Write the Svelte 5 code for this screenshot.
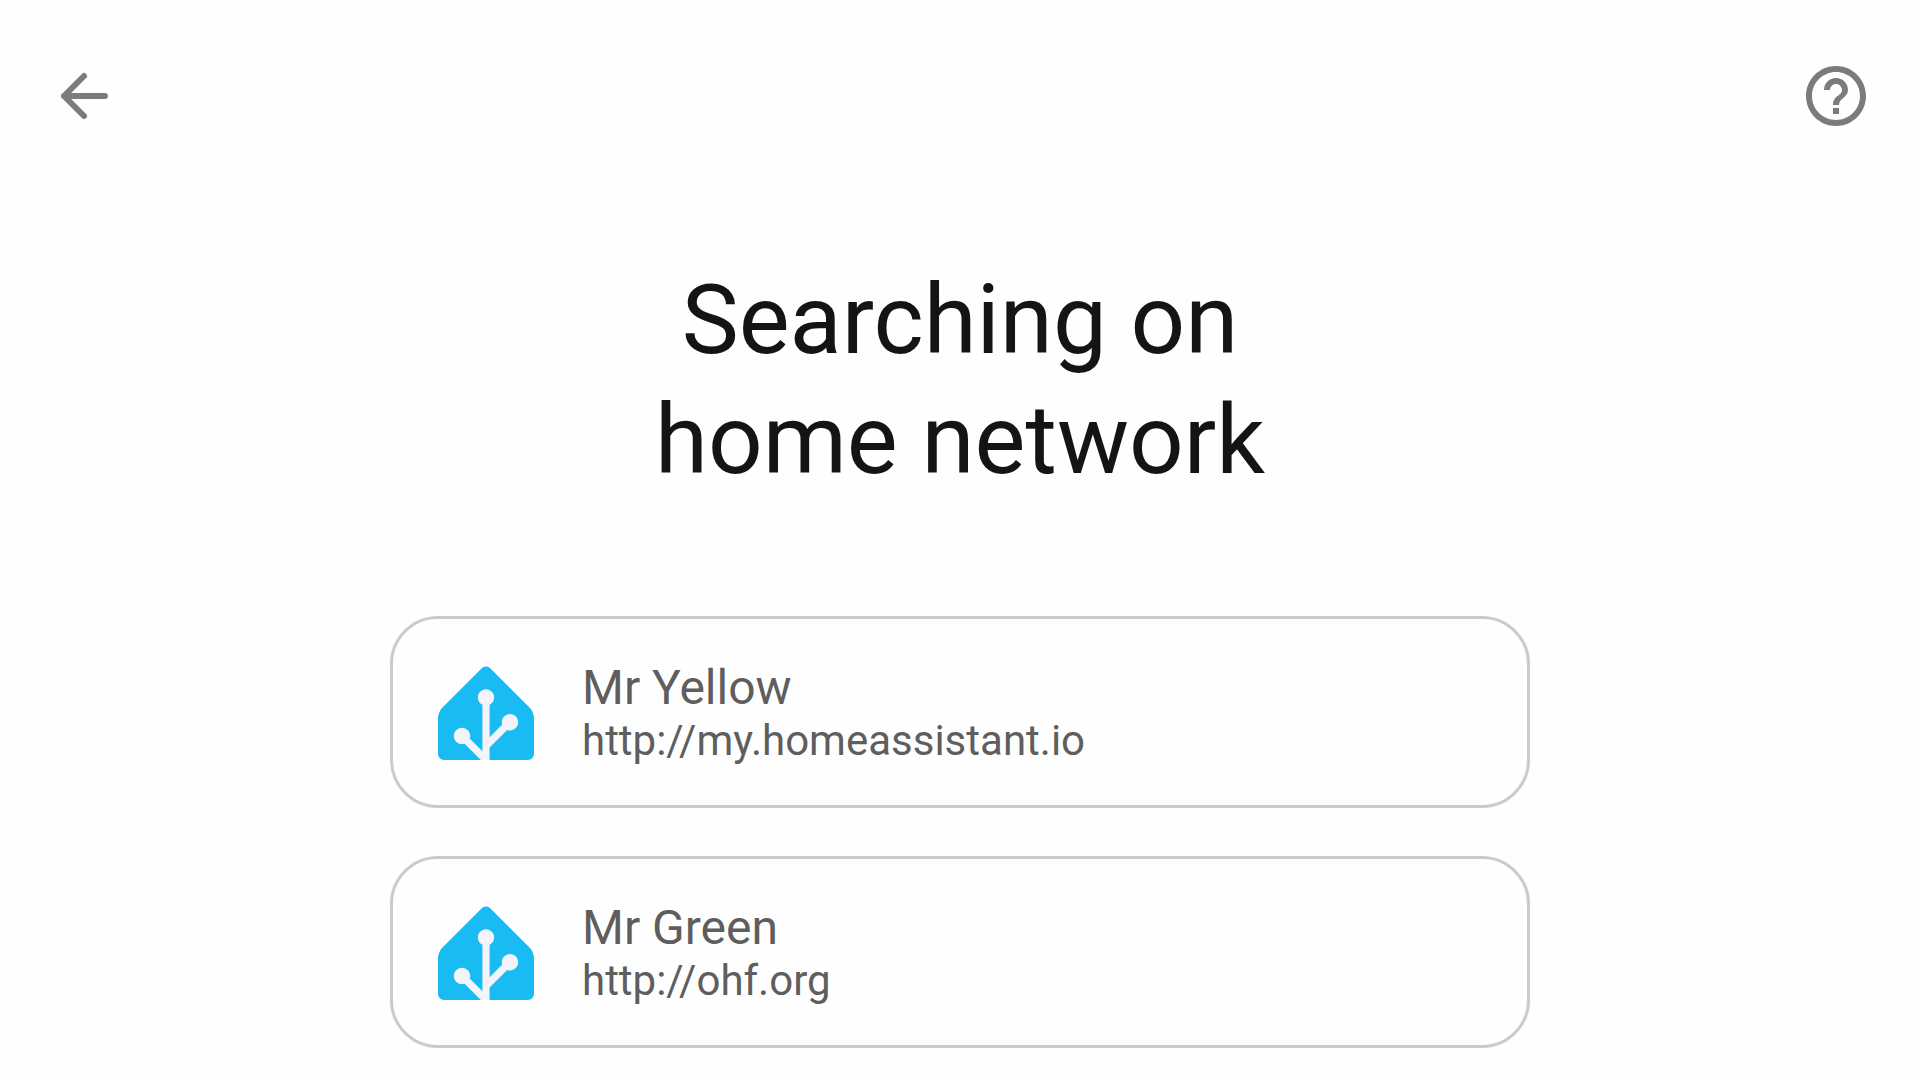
<script>
  const servers = [
    { name: 'Mr Yellow', url: 'http://my.homeassistant.io' },
    { name: 'Mr Green', url: 'http://ohf.org' }
  ];
</script>

<div class="screen">
  <header class="topbar">
    <button class="icon-button" type="button" aria-label="Back">
      <svg viewBox="0 0 72 72" aria-hidden="true">
        <path
          d="M36 16 16 36l20 20M16 36h41"
          fill="none"
          stroke="currentColor"
          stroke-width="6"
          stroke-linecap="round"
          stroke-linejoin="round"
        />
      </svg>
    </button>
    <button class="icon-button" type="button" aria-label="Help">
      <svg viewBox="0 0 24 24" aria-hidden="true">
        <path
          fill="currentColor"
          d="M11 18h2v-2h-2v2zm1-16C6.48 2 2 6.48 2 12s4.48 10 10 10 10-4.48 10-10S17.52 2 12 2zm0 18c-4.41 0-8-3.59-8-8s3.59-8 8-8 8 3.59 8 8-3.59 8-8 8zm0-14c-2.21 0-4 1.79-4 4h2c0-1.1.9-2 2-2s2 .9 2 2c0 2-3 1.75-3 5h2c0-2.25 3-2.5 3-5 0-2.21-1.79-4-4-4z"
        />
      </svg>
    </button>
  </header>

  <main class="content">
    <h1>Searching on<br />home network</h1>

    <ul class="servers">
      {#each servers as server (server.url)}
        <li>
          <button class="card" type="button">
            <svg class="logo" viewBox="0 0 240 240" aria-hidden="true">
              <path
                class="house"
                d="M240 224.762a15 15 0 0 1-15 15H15a15 15 0 0 1-15-15v-90c0-8.25 4.77-19.769 10.61-25.609l98.78-98.78c5.83-5.83 15.38-5.83 21.21 0l98.79 98.789c5.83 5.83 10.61 17.36 10.61 25.61v90z"
              />
              <path
                class="tree"
                d="m107.27 239.762-40.63-40.63c-2.09.72-4.32 1.13-6.64 1.13-11.3 0-20.5-9.2-20.5-20.5s9.2-20.5 20.5-20.5 20.5 9.2 20.5 20.5c0 2.33-.41 4.56-1.13 6.65l31.63 31.63v-115.88c-6.8-3.34-11.5-10.32-11.5-18.39 0-11.3 9.2-20.5 20.5-20.5s20.5 9.2 20.5 20.5c0 8.07-4.7 15.05-11.5 18.39v81.27l31.46-31.46c-.62-1.96-.96-4.04-.96-6.2 0-11.3 9.2-20.5 20.5-20.5s20.5 9.2 20.5 20.5-9.2 20.5-20.5 20.5c-2.5 0-4.88-.47-7.09-1.29L129 208.892v30.87z"
              />
            </svg>
            <span class="details">
              <span class="name">{server.name}</span>
              <span class="url">{server.url}</span>
            </span>
          </button>
        </li>
      {/each}
    </ul>
  </main>
</div>

<style>
  :global(body) {
    margin: 0;
    background: #fefefe;
  }

  .screen {
    min-height: 100vh;
    box-sizing: border-box;
    font-family: Roboto, 'Liberation Sans', sans-serif;
    color: #5e5e5e;
  }

  button {
    font: inherit;
    color: inherit;
    background: none;
    border: 0;
    padding: 0;
    cursor: pointer;
  }

  .topbar {
    display: flex;
    align-items: center;
    justify-content: space-between;
    padding: 24px 12px;
  }

  .icon-button {
    display: grid;
    place-items: center;
    width: 144px;
    height: 144px;
    border-radius: 50%;
    color: #7b7b7b;
  }

  .icon-button svg {
    width: 72px;
    height: 72px;
  }

  .content {
    display: flex;
    flex-direction: column;
    align-items: center;
    gap: 116px;
    padding: 68px 48px 32px;
  }

  h1 {
    margin: 0;
    font-size: 96px;
    font-weight: 400;
    line-height: 120px;
    text-align: center;
    color: #141414;
  }

  .servers {
    display: flex;
    flex-direction: column;
    gap: 48px;
    width: 100%;
    max-width: 1140px;
    margin: 0;
    padding: 0;
    list-style: none;
  }

  .card {
    display: flex;
    align-items: center;
    gap: 48px;
    width: 100%;
    min-height: 192px;
    box-sizing: border-box;
    padding: 40px 45px;
    border: 3px solid #cbcbcb;
    border-radius: 48px;
    text-align: left;
  }

  .logo {
    flex: none;
    width: 96px;
    height: 96px;
  }

  .house {
    fill: #18bcf2;
  }

  .tree {
    fill: #f2f4f9;
  }

  .details {
    display: flex;
    flex-direction: column;
    min-width: 0;
  }

  .name {
    font-size: 48px;
    line-height: 58px;
  }

  .url {
    font-size: 42px;
    line-height: 48px;
    overflow-wrap: anywhere;
  }
</style>
